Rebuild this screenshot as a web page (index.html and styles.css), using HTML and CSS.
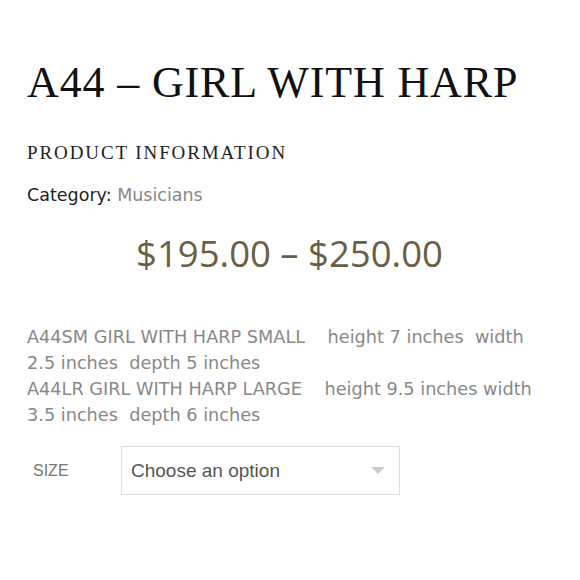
FILE: index.html
```html
<!DOCTYPE html>
<html>
<head>
<meta charset="utf-8">
<link rel="stylesheet" href="styles.css">
</head>
<body>
<div class="product">
  <h1 class="title">A44 – GIRL WITH HARP</h1>
  <h2 class="section">PRODUCT INFORMATION</h2>
  <p class="category">Category: <span class="cat-link">Musicians</span></p>
  <p class="price">$195.00 – $250.00</p>
  <div class="desc">
    <p>A44SM GIRL WITH HARP SMALL &nbsp;&nbsp; height 7 inches &nbsp;width 2.5 inches &nbsp;depth 5 inches</p>
    <p>A44LR GIRL WITH HARP LARGE &nbsp;&nbsp; height 9.5 inches width 3.5 inches &nbsp;depth 6 inches</p>
  </div>
  <div class="variation">
    <span class="label">SIZE</span>
    <div class="select">
      <span class="select-text">Choose an option</span>
      <span class="arrow"></span>
    </div>
  </div>
</div>
</body>
</html>
```

FILE: styles.css
```css
html, body {
  margin: 0;
  padding: 0;
  background: #fff;
}
.product {
  padding: 57px 20px 0 27px;
}
.title {
  margin: 0;
  font-family: "Liberation Serif", serif;
  font-weight: normal;
  font-size: 44px;
  line-height: 52px;
  color: #111;
  letter-spacing: 0.85px;
}
.section {
  margin: 32px 0 0;
  font-family: "Liberation Serif", serif;
  font-weight: normal;
  font-size: 19px;
  line-height: 24px;
  letter-spacing: 1.9px;
  color: #222;
}
.category {
  margin: 18px 0 0;
  font-family: "DejaVu Sans", sans-serif;
  font-size: 17.5px;
  line-height: 24px;
  color: #222;
}
.cat-link {
  color: #888;
}
.price {
  margin: 22px 0 0 -8px;
  text-align: center;
  font-family: "Open Sans", sans-serif;
  font-size: 36.5px;
  line-height: 48px;
  color: #6b5e44;
}
.desc {
  margin-top: 47px;
  font-family: "DejaVu Sans", sans-serif;
  font-size: 17.7px;
  line-height: 26px;
  color: #888;
  width: 515px;
}
.desc p {
  margin: 0;
}
.variation {
  display: flex;
  align-items: center;
  margin-top: 18px;
  padding-left: 6px;
}
.label {
  width: 88px;
  font-family: "Liberation Sans", sans-serif;
  font-size: 16px;
  color: #777;
}
.select {
  box-sizing: border-box;
  width: 279px;
  height: 49px;
  border: 1px solid #ddd;
  display: flex;
  align-items: center;
  justify-content: space-between;
  padding: 0 14px 0 9px;
}
.select-text {
  font-family: "Liberation Sans", sans-serif;
  font-size: 19px;
  color: #555;
}
.arrow {
  width: 0;
  height: 0;
  border-left: 7px solid transparent;
  border-right: 7px solid transparent;
  border-top: 7px solid #ccc;
}
```
